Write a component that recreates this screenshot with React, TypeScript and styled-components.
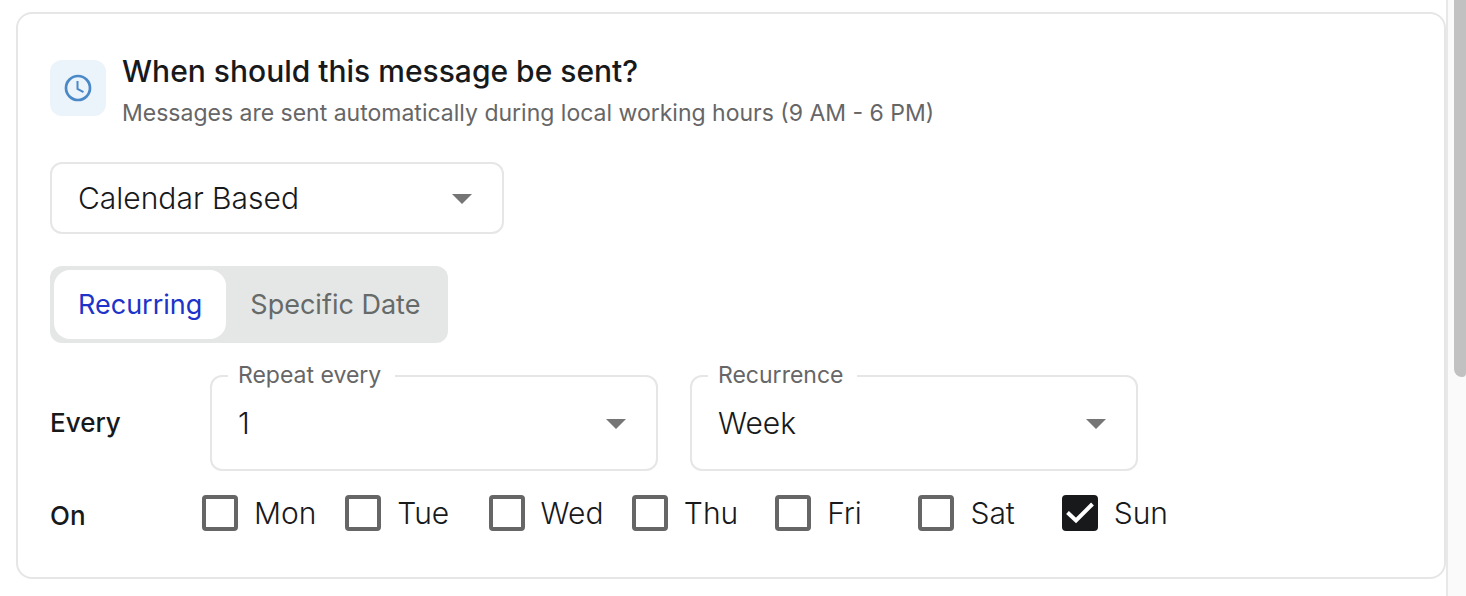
import { useState } from "react";
import styled, { createGlobalStyle } from "styled-components";

const GlobalStyle = createGlobalStyle`
  *, *::before, *::after { box-sizing: border-box; }
  body {
    margin: 0;
    background: #ffffff;
    color: #18191b;
    font-family: Inter, "Liberation Sans", sans-serif;
  }
`;

const Page = styled.div`
  display: flex;
  min-height: 100vh;
`;

const Main = styled.main`
  flex: 1;
  min-width: 0;
  padding: 12px 0 16px 16px;
  border-right: 2px solid #e8e8e8;
`;

const ScrollTrack = styled.div`
  width: 18px;
  padding-left: 6px;
  background: #fafafa;
`;

const ScrollThumb = styled.div`
  height: 377px;
  border-bottom-left-radius: 8px;
  border-bottom-right-radius: 4px;
  background: #c1c1c1;
`;

const Card = styled.section`
  padding: 34px 32px 40px;
  border: 2px solid #e6e6e6;
  border-radius: 16px;
`;

const Header = styled.header`
  display: flex;
  align-items: center;
  gap: 16px;
`;

const IconTile = styled.div`
  display: flex;
  align-items: center;
  justify-content: center;
  flex: none;
  width: 56px;
  height: 56px;
  border-radius: 12px;
  background: #ebf4fb;
`;

const Title = styled.h2`
  margin: 0 0 4px;
  font-size: 30px;
  font-weight: 500;
  line-height: 46px;
`;

const Subtitle = styled.p`
  margin: 0;
  color: #666666;
  font-size: 23px;
  font-weight: 400;
  line-height: 30px;
`;

const SelectBox = styled.div<{ $width: number; $height: number }>`
  position: relative;
  display: flex;
  width: ${(p) => p.$width}px;
  height: ${(p) => p.$height}px;
`;

const NativeSelect = styled.select`
  appearance: none;
  width: 100%;
  padding: 0 64px 0 26px;
  border: 2px solid #e6e6e6;
  border-radius: 12px;
  background: transparent;
  color: inherit;
  font-family: inherit;
  font-size: 30px;
  font-weight: 300;
`;

const Arrow = styled.svg`
  position: absolute;
  top: 50%;
  right: 32px;
  margin-top: -4px;
  pointer-events: none;
`;

const FloatingLabel = styled.label`
  position: absolute;
  top: -16px;
  left: 18px;
  padding: 0 14px 0 10px;
  background: #ffffff;
  color: #666666;
  font-size: 23px;
  line-height: 32px;
`;

const TriggerRow = styled.div`
  margin-top: 34px;
`;

const Segmented = styled.div`
  display: inline-flex;
  margin-top: 32px;
  padding: 4px;
  border-radius: 12px;
  background: #e4e7e6;
  vertical-align: top;
`;

const Segment = styled.button<{ $active: boolean }>`
  height: 69px;
  padding: 0 24px;
  border: 0;
  border-radius: 16px;
  background: ${(p) => (p.$active ? "#ffffff" : "transparent")};
  color: ${(p) => (p.$active ? "#2033c8" : "#666a69")};
  font-family: inherit;
  font-size: 27px;
  font-weight: 400;
`;

const Row = styled.div<{ $gap: number }>`
  display: flex;
  align-items: center;
  margin-top: ${(p) => p.$gap}px;
`;

const RowName = styled.div`
  flex: none;
  width: 160px;
  font-size: 26px;
  font-weight: 500;
  line-height: 36px;
`;

const Fields = styled.div`
  display: flex;
  gap: 32px;
`;

const Days = styled.div`
  display: grid;
  grid-template-columns: repeat(7, 1fr);
  width: 1003px;
  margin-left: -8px;
  padding-bottom: 6px;
`;

const Day = styled.label`
  display: flex;
  align-items: center;
  gap: 16px;
  font-size: 30px;
  font-weight: 300;
  line-height: 36px;
`;

const CheckWrap = styled.span`
  position: relative;
  display: flex;
  flex: none;
`;

const Checkbox = styled.input`
  appearance: none;
  width: 36px;
  height: 36px;
  margin: 0;
  border: 4px solid #666666;
  border-radius: 4px;

  &:checked {
    border-color: #18191b;
    background: #18191b;
  }
`;

const Tick = styled.svg`
  position: absolute;
  inset: 0;
  pointer-events: none;
`;

interface DropDownProps {
  id: string;
  label: string;
  options: string[];
  width: number;
  height: number;
  floating?: boolean;
}

function DropDown({ id, label, options, width, height, floating }: DropDownProps) {
  return (
    <SelectBox $width={width} $height={height}>
      <NativeSelect id={id} aria-label={floating ? undefined : label}>
        {options.map((option) => (
          <option key={option}>{option}</option>
        ))}
      </NativeSelect>
      {floating && <FloatingLabel htmlFor={id}>{label}</FloatingLabel>}
      <Arrow width="20" height="10" viewBox="0 0 20 10" aria-hidden="true">
        <path d="M0 0h20L10 10z" fill="#757575" />
      </Arrow>
    </SelectBox>
  );
}

const dayNames = ["Mon", "Tue", "Wed", "Thu", "Fri", "Sat", "Sun"];
const modes = ["Recurring", "Specific Date"];

export default function App() {
  const [mode, setMode] = useState(modes[0]);
  const [selected, setSelected] = useState<string[]>(["Sun"]);

  const toggleDay = (day: string) =>
    setSelected((days) =>
      days.includes(day) ? days.filter((d) => d !== day) : [...days, day]
    );

  return (
    <Page>
      <GlobalStyle />
      <Main>
        <Card>
          <Header>
            <IconTile>
              <svg width="28" height="28" viewBox="0 0 28 28" fill="none" stroke="#4a88c7" aria-hidden="true">
                <circle cx="14" cy="14" r="12" strokeWidth="2.7" />
                <path d="M13.5 7v7.8l6 3.4" strokeWidth="2" />
              </svg>
            </IconTile>
            <div>
              <Title>When should this message be sent?</Title>
              <Subtitle>
                Messages are sent automatically during local working hours (9 AM - 6 PM)
              </Subtitle>
            </div>
          </Header>

          <TriggerRow>
            <DropDown
              id="trigger"
              label="Trigger type"
              options={["Calendar Based"]}
              width={454}
              height={72}
            />
          </TriggerRow>

          <Segmented>
            {modes.map((name) => (
              <Segment
                key={name}
                type="button"
                $active={mode === name}
                aria-pressed={mode === name}
                onClick={() => setMode(name)}
              >
                {name}
              </Segment>
            ))}
          </Segmented>

          <Row $gap={32}>
            <RowName>Every</RowName>
            <Fields>
              <DropDown id="repeat" label="Repeat every" options={["1"]} width={448} height={96} floating />
              <DropDown id="recurrence" label="Recurrence" options={["Week"]} width={448} height={96} floating />
            </Fields>
          </Row>

          <Row $gap={24}>
            <RowName>On</RowName>
            <Days>
              {dayNames.map((day) => (
                <Day key={day}>
                  <CheckWrap>
                    <Checkbox
                      type="checkbox"
                      checked={selected.includes(day)}
                      onChange={() => toggleDay(day)}
                    />
                    {selected.includes(day) && (
                      <Tick width="36" height="36" viewBox="0 0 36 36" aria-hidden="true">
                        <path d="M5.5 17.5l8.5 8L30.5 9" fill="none" stroke="#ffffff" strokeWidth="4" />
                      </Tick>
                    )}
                  </CheckWrap>
                  {day}
                </Day>
              ))}
            </Days>
          </Row>
        </Card>
      </Main>
      <ScrollTrack>
        <ScrollThumb />
      </ScrollTrack>
    </Page>
  );
}
